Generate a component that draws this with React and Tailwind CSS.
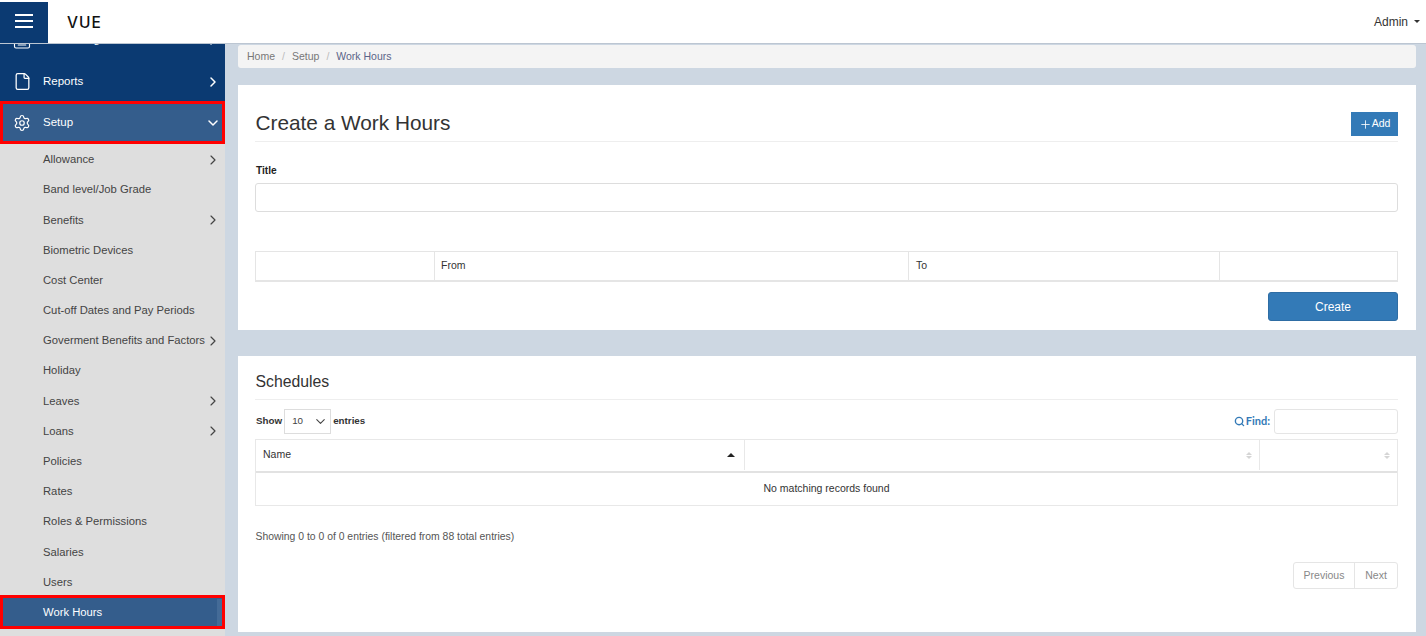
import { ChevronDown, ChevronRight, File, Keyboard, Plus, Search, Settings } from 'lucide-react';

const subItems = [
  { label: 'Allowance', more: true },
  { label: 'Band level/Job Grade' },
  { label: 'Benefits', more: true },
  { label: 'Biometric Devices' },
  { label: 'Cost Center' },
  { label: 'Cut-off Dates and Pay Periods' },
  { label: 'Goverment Benefits and Factors', more: true },
  { label: 'Holiday' },
  { label: 'Leaves', more: true },
  { label: 'Loans', more: true },
  { label: 'Policies' },
  { label: 'Rates' },
  { label: 'Roles & Permissions' },
  { label: 'Salaries' },
  { label: 'Users' },
];

function SortArrows() {
  return (
    <span className="flex flex-col gap-[1px]">
      <span className="w-0 h-0 border-x-[3px] border-x-transparent border-b-[3px] border-b-[#d5d5d5]" />
      <span className="w-0 h-0 border-x-[3px] border-x-transparent border-t-[3px] border-t-[#d5d5d5]" />
    </span>
  );
}

function Sidebar() {
  return (
    <aside className="w-[225px] shrink-0 -mt-[26px] bg-[#dedede] flex flex-col">
      <div className="h-[42px] shrink-0 bg-[#0b3a72] text-white flex items-center pl-[13px] pr-[4px] pt-[2px]">
        <Keyboard className="w-[18px] h-[18px] translate-y-[2px]" strokeWidth={1.5} />
        <span className="ml-[12px] flex-1 text-[11.5px]">Accounting</span>
        <ChevronRight className="w-4 h-4" strokeWidth={2.25} />
      </div>
      <div className="h-[41px] shrink-0 bg-[#0b3a72] text-white flex items-center pl-[13px] pr-[4px] pt-[2px]">
        <File className="w-[19px] h-[19px]" strokeWidth={1.6} />
        <span className="ml-[11px] flex-1 text-[11.5px]">Reports</span>
        <ChevronRight className="w-4 h-4" strokeWidth={2.25} />
      </div>
      <div className="h-[43px] shrink-0 bg-[#345d8c] text-white border-[3px] border-[#f00] flex items-center pl-[10px] pr-[1px] pt-[1px]">
        <Settings className="w-[18px] h-[18px]" strokeWidth={1.6} />
        <span className="ml-[12px] flex-1 text-[11.5px]">Setup</span>
        <ChevronDown className="w-4 h-4" strokeWidth={2.25} />
      </div>
      {subItems.map((item) => (
        <div key={item.label} className="h-[30.2px] shrink-0 flex items-center pl-[43px] pr-[4px] pt-[1px] text-[#444] text-[11.25px]">
          <span className="flex-1 whitespace-nowrap">{item.label}</span>
          {item.more && <ChevronRight className="w-4 h-4 shrink-0" strokeWidth={1.75} />}
        </div>
      ))}
      <div className="h-[34px] shrink-0 -mt-[2px] bg-[#345d8c] text-white border-[3px] border-[#f00] flex items-center pl-[40px] pt-[1px] text-[11.25px]">
        <span className="flex-1">Work Hours</span>
        <span className="w-[5px] h-full bg-[#446b97]" />
      </div>
    </aside>
  );
}

export default function App() {
  return (
    <div className="w-[1426px] h-[636px] overflow-hidden flex flex-col bg-[#cdd7e2] text-[#333] font-['Liberation_Sans',Arial,sans-serif]">
      <header className="relative z-10 h-[44px] shrink-0 bg-white border-b border-[#bcc6d2] flex items-stretch pt-[2px]">
        <div className="w-[48px] bg-[#0b3a72] text-white flex items-center justify-center pb-[4px]">
          <svg width="18" height="14" viewBox="0 0 18 14" fill="none" stroke="currentColor" strokeWidth="1.8">
            <path d="M0 1h18M0 7h18M0 13h18" />
          </svg>
        </div>
        <div className="ml-[19px] flex-1 flex items-center text-[#111] text-[15.5px] font-['Inter',sans-serif] font-medium tracking-[1px]">VUE</div>
        <div className="flex items-center gap-[6px] pr-[6px] pb-[2px] text-[12px] text-[#333]">
          Admin
          <span className="w-0 h-0 border-x-[3px] border-x-transparent border-t-[3px] border-t-[#333]" />
        </div>
      </header>

      <div className="flex flex-1 min-h-0">
        <Sidebar />

        <main className="flex-1 min-w-0 pl-[13px] pr-[10px] pt-[1px]">
          <nav className="h-[23px] bg-[#f4f4f4] rounded-[3px] flex items-center gap-[7px] pl-[9px] text-[10.5px] text-[#777]">
            <span>Home</span>
            <span className="text-[#bbb]">/</span>
            <span>Setup</span>
            <span className="text-[#bbb]">/</span>
            <span className="text-[#5b6488]">Work Hours</span>
          </nav>

          <section className="mt-[17px] h-[245px] bg-white pl-[17px] pr-[18px] flex flex-col">
            <div className="h-[57px] border-b border-[#eee] flex items-end justify-between pb-[5px] shrink-0">
              <h1 className="text-[20.8px] leading-[26px] pl-[0.5px] text-[#333]">Create a Work Hours</h1>
              <button className="w-[47px] h-[24px] bg-[#337ab7] text-white text-[10.5px] flex items-center justify-center">
                <Plus className="w-[13px] h-[13px]" strokeWidth={1.5} />Add
              </button>
            </div>
            <label className="mt-[23px] pl-[1px] text-[10.2px] leading-[12px] font-bold text-[#222]">Title</label>
            <input className="mt-[6px] h-[29px] border border-[#ddd] rounded-[3px] shrink-0" />
            <div className="mt-[39px] h-[31px] shrink-0 border border-[#e5e5e5] border-b-2 flex text-[10.5px] text-[#333]">
              <div className="w-[179px] border-r border-[#e5e5e5]" />
              <div className="w-[474px] border-r border-[#e5e5e5] pl-[6px] flex items-center">From</div>
              <div className="w-[311px] border-r border-[#e5e5e5] pl-[7px] flex items-center">To</div>
              <div className="flex-1" />
            </div>
            <div className="mt-[10px] flex justify-end">
              <button className="w-[130px] h-[29px] bg-[#337ab7] border border-[#2e6da4] rounded-[3px] text-white text-[12px]">Create</button>
            </div>
          </section>

          <section className="mt-[26px] h-[276px] bg-white pl-[17px] pr-[18px] flex flex-col">
            <div className="h-[44px] shrink-0 border-b border-[#eee] flex items-end pb-[8px]">
              <h2 className="text-[15.8px] leading-[18px] pl-[0.5px] text-[#333]">Schedules</h2>
            </div>
            <div className="mt-[9px] h-[25px] shrink-0 flex items-center justify-between text-[9.8px]">
              <div className="flex items-center gap-[2px] pl-[1px]">
                <span className="font-bold text-[#333]">Show</span>
                <div className="w-[47px] h-[25px] border border-[#ddd] flex items-center justify-between pl-[7px] pr-[2px] text-[#444]">
                  10
                  <ChevronDown className="w-[15px] h-[15px]" strokeWidth={1.75} />
                </div>
                <span className="font-bold text-[#333]">entries</span>
              </div>
              <div className="flex items-center gap-[4px]">
                <Search className="w-[11px] h-[11px] -mr-[3px] text-[#337ab7]" strokeWidth={3} />
                <span className="font-['Lato',sans-serif] text-[11px] font-bold text-[#337ab7]">Find:</span>
                <div className="w-[124px] h-[25px] border border-[#e5e5e5] rounded-[3px]" />
              </div>
            </div>
            <div className="mt-[5px] shrink-0 border border-[#e8e8e8] text-[10.5px]">
              <div className="h-[33px] border-b-2 border-[#e2e2e2] flex pb-[1px]">
                <div className="w-[488px] pl-[7px] pr-[9px] flex items-center justify-between">
                  Name
                  <span className="w-0 h-0 border-x-[4px] border-x-transparent border-b-[4px] border-b-[#222]" />
                </div>
                <div className="w-[515px] border-l border-[#e8e8e8] pr-[7px] flex items-center justify-end"><SortArrows /></div>
                <div className="flex-1 border-l border-[#e8e8e8] pr-[7px] flex items-center justify-end"><SortArrows /></div>
              </div>
              <div className="h-[32px] flex items-center justify-center text-[#333]">No matching records found</div>
            </div>
            <div className="mt-[25px] pl-[0.5px] text-[10.4px] leading-[12px] text-[#555]">Showing 0 to 0 of 0 entries (filtered from 88 total entries)</div>
            <div className="mt-[19px] flex justify-end">
              <div className="h-[27px] border border-[#e5e5e5] rounded-[3px] flex text-[10.5px] text-[#888]">
                <span className="w-[61px] flex items-center justify-center border-r border-[#e5e5e5]">Previous</span>
                <span className="w-[42px] flex items-center justify-center">Next</span>
              </div>
            </div>
          </section>
        </main>
      </div>
    </div>
  );
}
